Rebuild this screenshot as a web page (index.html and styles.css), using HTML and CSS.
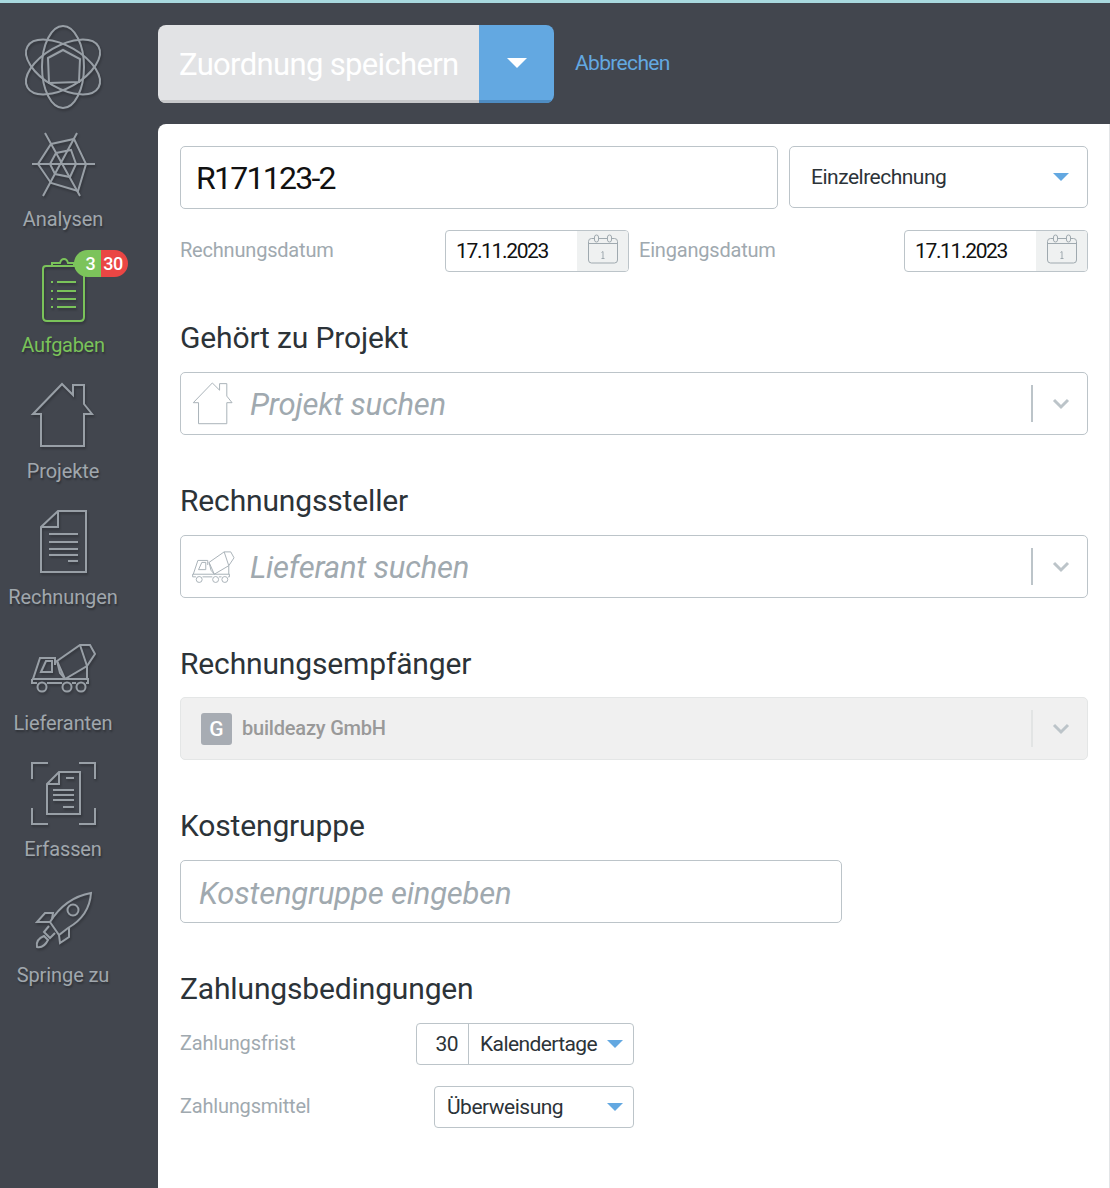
FILE: index.html
```html
<!DOCTYPE html>
<html lang="de">
<head>
<meta charset="UTF-8">
<meta name="viewport" content="width=device-width,minimum-scale=1,initial-scale=1">
<title>Zuordnung speichern</title>
<link rel="stylesheet" href="styles.css">
</head>
<body>

<svg class="defs" xmlns="http://www.w3.org/2000/svg" aria-hidden="true">
	<symbol id="i-house" viewBox="0 0 70 70">
		<path d="M5 33 34 3 45 14V4H56V23L64 33H56V65H13V33Z"/>
	</symbol>
	<symbol id="i-truck" viewBox="0 0 70 70">
		<path d="M5 46 12 25H27V32M13 39 18 28H24V39ZM4 46H60V50H58M48 50H44M34 50H19M9 50H4V46"/>
		<circle cx="14" cy="54" r="4.500"/><circle cx="39" cy="54" r="4.500"/><circle cx="53" cy="54" r="4.500"/>
		<path d="M29 28 52 12H62L67 21 59 33 37 46 32 40Z"/>
		<path d="M52 12 59 33M29 28 37 46M59 33V46"/>
	</symbol>
	<symbol id="i-cal" viewBox="0 0 32 32">
		<path d="M1.500 8.500Q1.500 5.500 4.500 5.500H7M12 5.500H20M25 5.500H27.500Q30.500 5.500 30.500 8.500V27Q30.500 30 27.500 30H4.500Q1.500 30 1.500 27V8.500M1.500 10.500H30.500"/>
		<rect x="7.500" y="2" width="4" height="7" rx="2"/><rect x="20.500" y="2" width="4" height="7" rx="2"/>
		<path d="M14.500 19.500 16 18.500V25.500M14.500 25.500H17.500"/>
	</symbol>
</svg>

<div class="top-line"></div>
<div class="app">
	<nav class="sidebar">
		<a class="logo">
			<svg class="icon" viewBox="0 0 90 90">
				<ellipse cx="45" cy="45" rx="21" ry="41"/>
				<ellipse cx="45" cy="45" rx="21" ry="41" transform="rotate(60 45 45)"/>
				<ellipse cx="45" cy="45" rx="21" ry="41" transform="rotate(120 45 45)"/>
				<path class="solid" d="M30 36 45 28 62 37 61 60 31 61Z"/>
			</svg>
		</a>
		<a class="nav-item">
			<svg class="icon" viewBox="0 -2 70 70">
				<path d="M4 33H67M17 2 52 65M49 2 15 65"/>
				<path d="M23 13 46 8 58 33 50 60 23 52 10 33ZM28 22 43 19 48 33 42 46 27 43 22 33Z"/>
			</svg>
			<span class="nav-label">Analysen</span>
		</a>
		<a class="nav-item nav-active">
			<svg class="icon" viewBox="0 0 70 70">
				<path d="M20 11H18Q15 11 15 14V62Q15 66 19 66H52Q56 66 56 62V14Q56 11 53 11H51M24 11V8H32Q33 4 36 4 39 4 40 8H46V11H20"/>
				<path d="M29 27H48M29 36H48M29 44H48M29 52H48"/>
				<path d="M23 27H25M23 36H25M23 44H25M23 52H25"/>
			</svg>
			<span class="badges"><span class="badge badge-green">3</span><span class="badge badge-red">30</span></span>
			<span class="nav-label">Aufgaben</span>
		</a>
		<a class="nav-item">
			<svg class="icon"><use href="#i-house"/></svg>
			<span class="nav-label">Projekte</span>
		</a>
		<a class="nav-item">
			<svg class="icon" viewBox="0 0 70 70">
				<path d="M13 20 30 4H58V65H13ZM30 4V20H13"/>
				<path d="M21 27H50M21 35H50M21 42H50M21 48H50M40 54H50"/>
			</svg>
			<span class="nav-label">Rechnungen</span>
		</a>
		<a class="nav-item">
			<svg class="icon"><use href="#i-truck"/></svg>
			<span class="nav-label">Lieferanten</span>
		</a>
		<a class="nav-item">
			<svg class="icon" viewBox="0 0 70 70">
				<path d="M20 4H4V20M51 4H67V20M4 49V65H20M67 49V65H51"/>
				<path d="M19 25 31 13H52V55H19ZM31 13V25H19"/>
				<path d="M25 31H46M25 36H46M25 41H46M38 19H46M35 48H46"/>
			</svg>
			<span class="nav-label">Erfassen</span>
		</a>
		<a class="nav-item">
			<svg class="icon" viewBox="0 -1 70 70">
				<path d="M22 36C32 20 46 10 63 7 62 22 54 34 40 42L31 49 22 36Z"/>
				<circle cx="45" cy="24" r="5.500"/>
				<path d="M24 33 25 27H17L9 36H22M41 42V51L32 57 31 49"/>
				<path d="M21 40 16 46 22 52 27 47M16 50C11 52 8 56 9 61 14 62 18 58 20 54Z"/>
			</svg>
			<span class="nav-label">Springe zu</span>
		</a>
	</nav>

	<main class="main">
		<header class="actions">
			<div class="save-btn">
				<span class="save-label">Zuordnung speichern</span>
				<span class="save-toggle"><i class="caret caret-white"></i></span>
			</div>
			<a class="cancel">Abbrechen</a>
		</header>

		<section class="panel">
			<div class="row-top">
				<div class="field field-number">R171123-2</div>
				<div class="field field-type">Einzelrechnung<i class="caret"></i></div>
			</div>

			<div class="row-dates">
				<div class="date-group">
					<label class="label">Rechnungsdatum</label>
					<div class="date-input">
						<span class="date-value">17.11.2023</span>
						<span class="date-addon"><svg class="cal"><use href="#i-cal"/></svg></span>
					</div>
				</div>
				<div class="date-group">
					<label class="label">Eingangsdatum</label>
					<div class="date-input">
						<span class="date-value">17.11.2023</span>
						<span class="date-addon"><svg class="cal"><use href="#i-cal"/></svg></span>
					</div>
				</div>
			</div>

			<h2 class="title">Gehört zu Projekt</h2>
			<div class="search">
				<svg class="search-icon"><use href="#i-house"/></svg>
				<span class="placeholder">Projekt suchen</span>
				<span class="sep"></span>
				<svg class="chevron" viewBox="0 0 18 12"><path d="M2 2 9 9 16 2"/></svg>
			</div>

			<h2 class="title">Rechnungssteller</h2>
			<div class="search">
				<svg class="search-icon"><use href="#i-truck"/></svg>
				<span class="placeholder">Lieferant suchen</span>
				<span class="sep"></span>
				<svg class="chevron" viewBox="0 0 18 12"><path d="M2 2 9 9 16 2"/></svg>
			</div>

			<h2 class="title title-tight">Rechnungsempfänger</h2>
			<div class="search search-off">
				<span class="avatar">G</span>
				<span class="company">buildeazy GmbH</span>
				<span class="sep"></span>
				<svg class="chevron" viewBox="0 0 18 12"><path d="M2 2 9 9 16 2"/></svg>
			</div>

			<h2 class="title">Kostengruppe</h2>
			<div class="field field-cost"><span class="placeholder">Kostengruppe eingeben</span></div>

			<h2 class="title">Zahlungsbedingungen</h2>
			<div class="pay-row">
				<label class="label">Zahlungsfrist</label>
				<div class="combo">
					<span class="combo-num">30</span>
					<span class="combo-unit">Kalendertage<i class="caret"></i></span>
				</div>
			</div>
			<div class="pay-row pay-row-2">
				<label class="label">Zahlungsmittel</label>
				<div class="pay-select">Überweisung<i class="caret"></i></div>
			</div>
		</section>
	</main>
</div>

</body>
</html>
```

FILE: styles.css
```css
* {
	box-sizing: border-box;
}
html, body {
	height: 100%;
}
body {
	margin: 0;
	overflow: hidden;
	background: #42464e;
	font-family: Roboto, "Liberation Sans", sans-serif;
	color: #2c3338;
}
.defs {
	position: absolute;
	width: 0;
	height: 0;
}
.top-line {
	height: 3px;
	background: #a9d9df;
}
.app {
	display: flex;
	height: 1185px;
}

/* sidebar */
.sidebar {
	flex: 0 0 158px;
	display: flex;
	flex-direction: column;
}
.sidebar svg {
	fill: none;
	stroke: #989fa6;
	stroke-width: 2;
	filter: drop-shadow(1px 2px 1px rgba(0, 0, 0, .25));
}
.logo {
	display: flex;
	justify-content: center;
	width: 126px;
	height: 126px;
	padding-top: 19px;
}
.logo .icon {
	display: block;
	width: 90px;
	height: 90px;
}
.logo .solid {
	fill: #42464e;
}
.nav-item {
	position: relative;
	width: 126px;
	height: 126px;
	display: flex;
	flex-direction: column;
	align-items: center;
}
.nav-item .icon {
	display: block;
	width: 70px;
	height: 70px;
	flex: none;
}
.nav-label {
	margin-top: 6px;
	font-size: 20px;
	letter-spacing: -.1px;
	line-height: 28px;
	white-space: nowrap;
	color: #a0a7ad;
	text-shadow: 1px 2px 2px rgba(0, 0, 0, .3);
}
.nav-active svg {
	stroke: #7ac35a;
}
.nav-active .nav-label {
	color: #7ac35a;
	letter-spacing: -.3px;
}
.badges {
	position: absolute;
	left: 74px;
	top: -5px;
	display: flex;
	font-size: 18px;
	font-weight: 500;
	line-height: 27px;
	color: #fff;
}
.badge {
	width: 27px;
	height: 27px;
	text-align: center;
}
.badge-green {
	background: #7cc35b;
	border-radius: 14px 0 0 14px;
	padding-left: 6px;
}
.badge-red {
	background: #ea4644;
	border-radius: 0 14px 14px 0;
	padding-right: 3px;
	letter-spacing: -.5px;
}

/* header */
.main {
	flex: 1;
	display: flex;
	flex-direction: column;
	min-width: 0;
}
.actions {
	height: 121px;
	padding-top: 22px;
	display: flex;
	align-items: flex-start;
}
.save-btn {
	display: flex;
	width: 396px;
	height: 78px;
	border-radius: 8px;
	overflow: hidden;
}
.save-label {
	width: 321px;
	padding-left: 21px;
	background: #e2e3e5;
	border-bottom: 3px solid #c7c8ca;
	color: #fff;
	font-size: 31px;
	letter-spacing: -.65px;
	line-height: 80px;
	white-space: nowrap;
}
.save-toggle {
	flex: 1;
	display: flex;
	align-items: center;
	justify-content: center;
	background: #63a8e1;
	border-bottom: 3px solid #4e8cc2;
}
.cancel {
	margin: 23px 0 0 21px;
	font-size: 21px;
	letter-spacing: -.65px;
	line-height: 30px;
	color: #63a8e1;
}
.caret {
	display: block;
	flex: none;
	width: 0;
	height: 0;
	border-left: 8px solid transparent;
	border-right: 8px solid transparent;
	border-top: 8px solid #63a8e1;
}
.caret-white {
	border-left-width: 10px;
	border-right-width: 10px;
	border-top: 10px solid #fff;
}

/* panel */
.panel {
	flex: 1;
	background: #fff;
	border-top-left-radius: 8px;
	border-right: 1px solid #e3e5e7;
	padding: 22px 21px 0 22px;
}
.row-top {
	display: flex;
	gap: 11px;
}
.field {
	border: 1px solid #bcc4c9;
	border-radius: 5px;
	background: #fff;
	display: flex;
	align-items: center;
}
.field-number {
	flex: 1;
	height: 63px;
	padding-left: 15px;
	font-size: 32px;
	letter-spacing: -1.75px;
	color: #111;
}
.field-type {
	flex: 0 0 299px;
	height: 62px;
	padding: 0 18px 0 21px;
	justify-content: space-between;
	font-size: 21px;
	letter-spacing: -.5px;
}
.row-dates {
	display: flex;
	gap: 10px;
	margin-top: 21px;
}
.date-group {
	flex: 1;
	display: flex;
	align-items: center;
	justify-content: space-between;
}
.label {
	padding-bottom: 2px;
	font-size: 20px;
	letter-spacing: -.2px;
	color: #a0a9af;
}
.date-input {
	width: 184px;
	height: 42px;
	display: flex;
	border: 1px solid #bcc4c9;
	border-radius: 4px;
	overflow: hidden;
}
.date-value {
	width: 131px;
	padding-left: 10px;
	font-size: 21px;
	letter-spacing: -1.35px;
	line-height: 40px;
	color: #111;
}
.date-addon {
	flex: 1;
	display: flex;
	align-items: center;
	justify-content: center;
	background: #eff1f1;
}
.cal {
	width: 32px;
	height: 32px;
	margin-bottom: 4px;
	fill: none;
	stroke: #9fa9af;
	stroke-width: 1;
}
.title {
	margin: 0;
	height: 100px;
	padding-top: 48px;
	font-size: 30px;
	font-weight: 400;
	letter-spacing: -.15px;
	line-height: 36px;
	color: #2c3338;
}
.title-tight {
	height: 99px;
}
.search {
	height: 63px;
	display: flex;
	align-items: center;
	border: 1px solid #bcc4c9;
	border-radius: 5px;
}
.search-icon {
	flex: none;
	width: 46px;
	height: 46px;
	margin-left: 9px;
	fill: none;
	stroke: #a9b2b8;
	stroke-width: 1.500;
}
.placeholder {
	padding-top: 1px;
	font-size: 31px;
	font-style: italic;
	letter-spacing: -.2px;
	color: #a0a9af;
}
.search .placeholder {
	margin-left: 14px;
}
.sep {
	width: 2px;
	height: 37px;
	margin-left: auto;
	background: #bcc4c9;
}
.chevron {
	flex: none;
	width: 18px;
	height: 12px;
	margin: 0 17px 0 19px;
	fill: none;
	stroke: #bcc4c9;
	stroke-width: 3;
}
.search-off {
	background: #f0f0f0;
	border-color: #e4e6e6;
}
.search-off .sep {
	background: #e2e4e4;
}
.avatar {
	width: 31px;
	height: 32px;
	margin-left: 20px;
	border-radius: 3px;
	background: #a7acb3;
	color: #fff;
	font-size: 21px;
	font-weight: 500;
	line-height: 32px;
	text-align: center;
}
.company {
	margin-left: 10px;
	padding-bottom: 1px;
	font-size: 20px;
	font-weight: 500;
	letter-spacing: -.2px;
	color: #999;
}
.field-cost {
	width: 662px;
	height: 63px;
	padding-left: 18px;
}
.field-cost .placeholder {
	padding-top: 3px;
}
.pay-row {
	width: 454px;
	height: 42px;
	display: flex;
	align-items: center;
	justify-content: space-between;
}
.pay-row-2 {
	margin-top: 21px;
}
.combo {
	width: 218px;
	height: 42px;
	display: flex;
	border: 1px solid #bcc4c9;
	border-radius: 4px;
	font-size: 21px;
	letter-spacing: -.6px;
	line-height: 40px;
}
.combo-num {
	width: 52px;
	padding-right: 10px;
	text-align: right;
	border-right: 1px solid #bcc4c9;
}
.combo-unit {
	flex: 1;
	display: flex;
	align-items: center;
	justify-content: space-between;
	padding: 0 10px 0 11px;
}
.pay-select {
	width: 200px;
	height: 42px;
	display: flex;
	align-items: center;
	justify-content: space-between;
	padding: 0 10px 0 12px;
	border: 1px solid #bcc4c9;
	border-radius: 4px;
	font-size: 21px;
	letter-spacing: -.5px;
}
```
